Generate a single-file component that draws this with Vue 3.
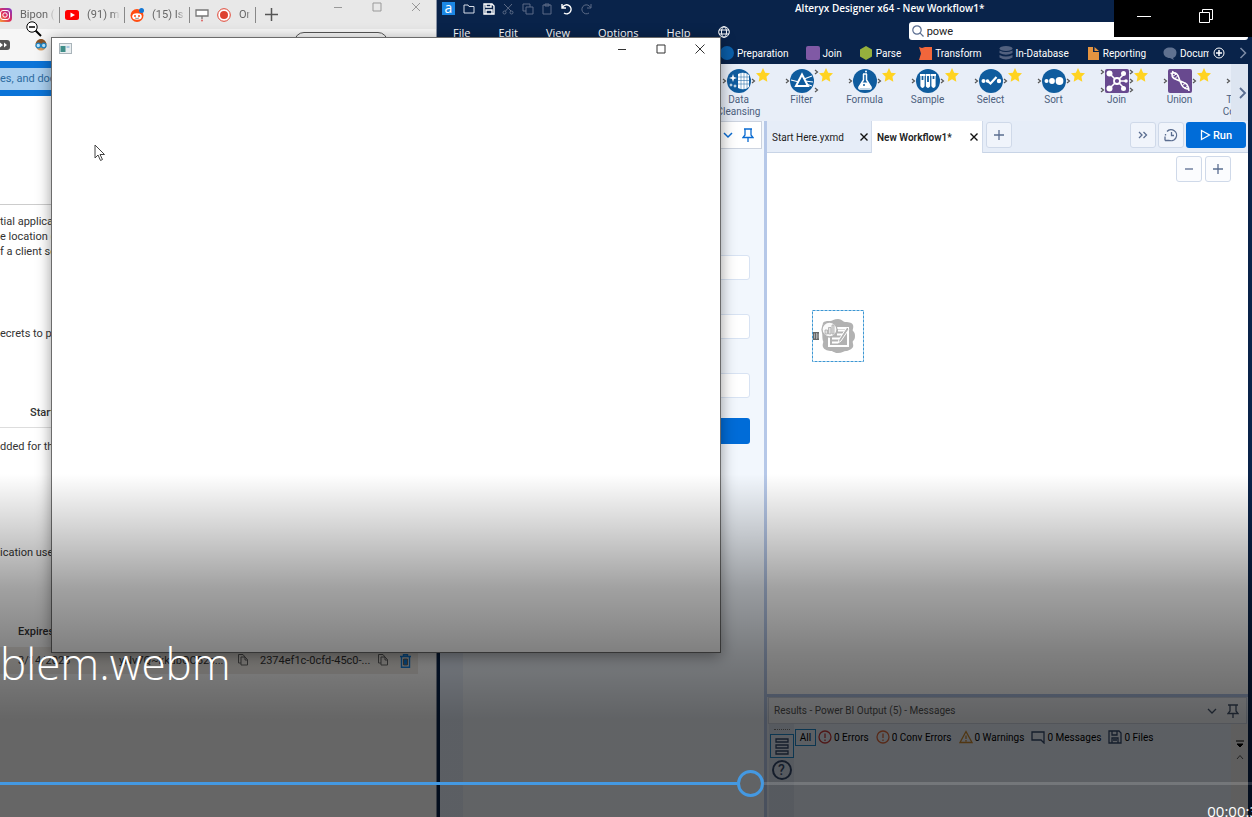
<script setup>
import { ref, computed } from 'vue'

const query = ref('powe')
const position = ref(60.2)
const trackStyle = computed(() => ({ '--done': position.value / 100 }))

const categories = [
  { name: 'Preparation', icon: '<circle cx="7" cy="7" r="7" fill="#0b5ea8"/>' },
  { name: 'Join', icon: '<rect width="14" height="14" rx="2" fill="#8059a5"/>' },
  { name: 'Parse', icon: '<path d="M7 0l6 3.500v7L7 14l-6-3.500v-7z" fill="#96b03d"/>' },
  { name: 'Transform', icon: '<path d="M1 1l3 1 3-1h7v13H1l2-6.500z" fill="#f1663b"/>' },
  { name: 'In-Database', icon: '<g fill="#52617f"><ellipse cx="7" cy="2.500" rx="6.500" ry="2.500"/><path d="M.5 4.500q6.500 3 13 0v2.500q-6.500 3.500-13 0zM.5 9q6.500 3 13 0v2.500q-6.500 4-13 0z"/></g>' },
  { name: 'Reporting', icon: '<path d="M2 1h5v5h6v8H2z" fill="#e59440"/><path d="M8.500 1L13 5H8.500z" fill="#e59440"/>' },
  { name: 'Docum', icon: '<path d="M7 1.500c4 0 6.500 2 6.500 5S12 11.500 10 12l1 2-4-2C3 12 .5 9.500.5 6.500s2.500-5 6.500-5z" fill="#5f7190"/>' }
]

const disc = '<circle cx="12" cy="12" r="12" fill="#0f5c9e"/>'
const tile = '<rect width="24" height="24" rx="2" fill="#68498f"/>'
const tools = [
  { name: 'Data Cleansing', right: 1, icon: disc + '<path d="M11 5q6-3 11 1v12q-5 4-11 1z" fill="#fff"/><path d="M14 4v16M17 4v16M20 5v14M11 8h11M11 11.500h11M11 15h11" stroke="#0f5c9e" stroke-width=".5"/><path d="M6 5l1 3 3 1-3 1-1 3-1-3-3-1 3-1zM4 14l.6 1.500 1.500.5-1.500.6L4 18l-.6-1.400L2 16l1.400-.5zM8 15l.6 1.500 1.500.5-1.500.6L8 19l-.6-1.400L6 17l1.400-.5z" fill="#fff"/>' },
  { name: 'Filter', right: 2, icon: disc + '<path d="M12 5.500l6 11.500H6z" fill="none" stroke="#fff" stroke-width="2"/><path d="M1 11l8 2M14 10l8-3M15 12l8 1M16 15l6 2" stroke="#fff" stroke-width="1.200"/>' },
  { name: 'Formula', right: 1, icon: disc + '<path d="M10 5h4M10.500 5v6l-4.500 7q-.5 2 1 2h10q1.500 0 1-2l-4.500-7V5" fill="none" stroke="#fff" stroke-width="1.500"/><path d="M9 13.500h6l3 5.500H6z" fill="#fff"/><circle cx="11" cy="16" r="1" fill="#0f5c9e"/><circle cx="13" cy="2.500" r="1" fill="#fff"/>' },
  { name: 'Sample', right: 1, icon: disc + '<path d="M4 6h5M9.500 6h5M15 6h5" stroke="#fff" stroke-width="2"/><path d="M5 7v10q1.500 3 3 0V7M10.500 7v10q1.500 3 3 0V7M16 7v10q1.500 3 3 0V7" fill="none" stroke="#fff" stroke-width="1.200"/><path d="M5 11h3v7H5zM10.500 13h3v5h-3zM16 10h3v8h-3z" fill="#fff"/>' },
  { name: 'Select', right: 1, icon: disc + '<path d="M8 11.500l3.500 3 6-6.500" fill="none" stroke="#fff" stroke-width="2.200"/><circle cx="4.500" cy="12" r="2" fill="#fff"/><circle cx="8.500" cy="12" r="1.800" fill="#fff"/><circle cx="20" cy="12" r="2.200" fill="#fff"/>' },
  { name: 'Sort', right: 1, icon: disc + '<circle cx="4.500" cy="12" r="2" fill="#fff"/><circle cx="10" cy="12" r="2.900" fill="#fff"/><circle cx="17.500" cy="12" r="3.900" fill="#fff"/>' },
  { name: 'Join', left: 2, right: 3, icon: tile + '<path d="M5 5l14 14M5 19L19 5M12 12h9" stroke="#fff" stroke-width="1.500"/><g fill="#fff"><circle cx="4.500" cy="4.500" r="3"/><circle cx="18.500" cy="4.500" r="2.500"/><circle cx="4.500" cy="19.500" r="3"/><circle cx="18.500" cy="19.500" r="2.500"/><circle cx="21" cy="12" r="1.800"/></g><circle cx="12" cy="12" r="3" fill="#68498f" stroke="#fff" stroke-width="1.800"/>' },
  { name: 'Union', right: 1, icon: tile + '<path d="M2.500 4.500C10 2 10 7 12 12s3 8 9.500 8.500M5 2C2 10 7 9.500 12 12s8 1 9 10" fill="none" stroke="#fff" stroke-width="1.600"/><path d="M4.500 7.500l4.500-3M7 9.500l3-3M14 17l3.500-3M16.500 19.500l3.500-3" stroke="#fff"/>' },
  { name: 'Text To Columns', right: 0, icon: '<path d="M12 0l12 6v12l-12 6L0 18V6z" fill="#96b03d"/>' }
]

const alertDisc = '<circle cx="7" cy="7" r="6"/><path d="M7 3.500v4.500M7 9.500v1.500"/>'
const filters = [
  { text: '0 Errors', color: '#c43a3a', icon: alertDisc },
  { text: '0 Conv Errors', color: '#d9673a', icon: alertDisc },
  { text: '0 Warnings', color: '#c9872c', icon: '<path d="M7 1.500l6 11H1zM7 5.500v3.500M7 10v1.500"/>' },
  { text: '0 Messages', color: '#34496b', icon: '<path d="M1 2h12v11l-3-3H1z"/>' },
  { text: '0 Files', color: '#34496b', icon: '<path d="M1 1h10l2 2v10H1zM4 1v4h5V1M4 13V8h6v5M5 10h4"/>' }
]

const connector = (n) => ({ 1: [10], 2: [1, 19], 3: [1, 10, 19] }[n] || [])
</script>

<template>
  <div class="desktop">
    <section class="browser">
      <nav class="tabs">
        <a class="tab insta" href="#">
          <svg class="fav" viewBox="0 0 14 14"><defs><linearGradient id="ig" x1="0" y1="1" x2="1" y2="0"><stop offset="0" stop-color="#f9b233" /><stop offset=".5" stop-color="#dd2a5b" /><stop offset="1" stop-color="#7a3bd0" /></linearGradient></defs><rect width="14" height="14" rx="4" fill="url(#ig)" /><rect x="2.500" y="2.500" width="9" height="9" rx="2.500" fill="none" stroke="#fff" /><circle cx="7" cy="7" r="2.200" fill="none" stroke="#fff" /></svg>
          <span class="name">Bipon (@</span>
        </a>
        <a class="tab" href="#">
          <svg class="fav" viewBox="0 0 14 14"><rect y="2" width="14" height="10" rx="2.500" fill="#f00" /><path d="M5.500 4.500v5L10 7z" fill="#fff" /></svg>
          <span class="name">(91) mo</span>
        </a>
        <a class="tab" href="#">
          <svg class="fav" viewBox="0 0 14 14"><circle cx="7" cy="7.500" r="6.500" fill="#ff4d12" /><ellipse cx="7" cy="8.500" rx="4.800" ry="3.200" fill="#fff" /><circle cx="5" cy="8" r="1" fill="#ff4d12" /><circle cx="9" cy="8" r="1" fill="#ff4d12" /><path d="M5 10q2 1 4 0" stroke="#444" stroke-width=".6" fill="none" /><circle cx="11.500" cy="2.500" r="2.500" fill="#1377d4" /></svg>
          <span class="name">(15) Is i</span>
        </a>
        <a class="tab record" href="#">
          <svg class="fav" viewBox="0 0 14 14"><path d="M1 2h12v6H1zM7 8v3" fill="#fff" stroke="#777" stroke-width="1.300" /><circle cx="7" cy="12.500" r="1" fill="#d66" /></svg>
          <svg class="fav" viewBox="0 0 14 14"><circle cx="7" cy="7" r="6.300" fill="#fff" stroke="#de4130" /><circle cx="7" cy="7" r="4" fill="#de4130" /></svg>
          <span class="name">Or</span>
        </a>
        <button class="newtab" aria-label="New tab"><svg width="13" height="13" viewBox="0 0 13 13"><path d="M6.500 0v13M0 6.500h13" stroke="#555" stroke-width="1.500" /></svg></button>
        <div class="winbtns">
          <button aria-label="Minimize"><svg width="10" height="10" viewBox="0 0 10 10"><path d="M1 5.500h8" /></svg></button>
          <button aria-label="Maximize"><svg width="10" height="10" viewBox="0 0 10 10"><path d="M1 1h8v8H1z" /></svg></button>
          <button aria-label="Close"><svg width="10" height="10" viewBox="0 0 10 10"><path d="M1 1l8 8M9 1L1 9" /></svg></button>
        </div>
      </nav>
      <div class="bookmarks">
        <svg width="10" height="10" viewBox="0 0 10 10"><rect x="-6" width="16" height="10" rx="3" fill="#555" /><path d="M0 2.500L3 5 0 7.500zM4 2.500L7 5 4 7.500z" fill="#fff" /></svg>
        <svg width="12" height="12" viewBox="0 0 12 12"><circle cx="6" cy="6" r="5.500" fill="#d99a5a" /><path d="M.5 5Q2 0 6 0t5.500 5z" fill="#8a5327" /><g fill="#bfe6fb" stroke="#1d86c9" stroke-width="1.300"><circle cx="3.300" cy="6.500" r="2.300" /><circle cx="8.700" cy="6.500" r="2.300" /></g></svg>
        <span class="omnibox"></span>
      </div>
      <div class="azure"><span class="azsearch">es, and docs</span></div>
      <div class="page">
        <p class="para">tial applicat<br>e location (u<br>f a client se</p>
        <p class="secrets">ecrets to pr</p>
        <p class="start">Start</p>
        <p class="none">dded for this</p>
        <p class="use">ication uses</p>
        <table class="creds">
          <thead><tr><th scope="col">Expires</th><td></td><td></td><td></td></tr></thead>
          <tbody>
            <tr>
              <td>3/14/2023</td>
              <td class="value">yNv7Q~kkubOC52s...<svg width="10" height="12" viewBox="0 0 10 12"><path d="M3 3h4l2.500 2.500V11H3zM7 3v3h2.500M3 9H.5V.5H5L7 3" /></svg></td>
              <td class="ident">2374ef1c-0cfd-45c0-...<svg width="10" height="12" viewBox="0 0 10 12"><path d="M3 3h4l2.500 2.500V11H3zM7 3v3h2.500M3 9H.5V.5H5L7 3" /></svg></td>
              <td><button class="trash" aria-label="Delete"><svg width="11" height="14" viewBox="0 0 11 14"><path d="M0 2.500h11M3.500 2.500V.7h4v1.800M1.500 2.500v10.800h8V2.500" fill="none" stroke="#0f7fe0" stroke-width="1.400" /><path d="M3.500 5h4v6h-4z" fill="#0f7fe0" /></svg></button></td>
            </tr>
          </tbody>
        </table>
      </div>
    </section>

    <section class="alteryx">
      <header class="titlebar">
        <span class="logo">a</span>
        <div class="quick">
          <svg class="qa" viewBox="0 0 12 12"><path d="M1 2h4l1 1.500h5V10H1z" /></svg>
          <svg class="qa strong" viewBox="0 0 12 12"><path d="M1 1h8l2 2v8H1zM3 1v3h5V1M3 11V7h6v4" /></svg>
          <svg class="qa dim" viewBox="0 0 12 12"><path d="M10 1L3.500 8M2 1l7 7" /><circle cx="2.500" cy="9.500" r="1.500" /><circle cx="9.500" cy="9.500" r="1.500" /></svg>
          <svg class="qa dim" viewBox="0 0 12 12"><path d="M4 4h7v7H4zM4 8H1V1h7v3" /></svg>
          <svg class="qa dim" viewBox="0 0 12 12"><path d="M2 2h8v9H2zM4 1h4v2H4z" /></svg>
          <svg class="qa strong" viewBox="0 0 12 12"><path d="M1 1v4h4M1.500 4.500A4.500 4.500 0 1 1 3 10" /></svg>
          <svg class="qa dim" viewBox="0 0 12 12"><path d="M11 1v4H7M10.500 4.500A4.500 4.500 0 1 0 9 10" /></svg>
        </div>
        <h1>Alteryx Designer x64 - New Workflow1*</h1>
      </header>
      <div class="menubar">
        <nav class="menu">
          <a href="#">File</a><a href="#">Edit</a><a href="#">View</a><a href="#">Options</a><a href="#">Help</a>
          <svg width="12" height="12" viewBox="0 0 12 12"><g fill="none" stroke="#fff"><circle cx="6" cy="6" r="5.300" /><ellipse cx="6" cy="6" rx="2.500" ry="5.300" /><path d="M1 4h10M1 8h10" /></g></svg>
        </nav>
        <label class="search">
          <svg width="12" height="12" viewBox="0 0 12 12"><circle cx="5" cy="5" r="4.200" fill="none" stroke="#5a6d90" stroke-width="1.200" /><path d="M8.200 8.200L11.500 11.500" stroke="#5a6d90" stroke-width="1.200" /></svg>
          <input v-model="query" aria-label="Search tools">
        </label>
      </div>
      <nav class="categories">
        <div class="catlist">
          <a v-for="c in categories" :key="c.name" href="#"><svg width="14" height="14" viewBox="0 0 14 14" v-html="c.icon"></svg>{{ c.name }}</a>
        </div>
        <button aria-label="Add category"><svg width="12" height="12" viewBox="0 0 12 12"><path d="M6 3v6M3 6h6" stroke="#fff" stroke-width="1.500" /><circle cx="6" cy="6" r="5" fill="none" stroke="#fff" /></svg></button>
        <button aria-label="More categories"><svg width="8" height="12" viewBox="0 0 8 12"><path d="M1.500 1l5 5-5 5" fill="none" stroke="#7e8ca6" stroke-width="1.500" /></svg></button>
      </nav>
      <div class="palette">
        <div class="toollist">
          <div v-for="(t, i) in tools" :key="i" class="tool">
            <svg width="56" height="26" viewBox="-16 -1 56 26">
              <g v-html="t.icon"></g>
              <g fill="none" stroke="#555" stroke-width="1.200">
                <path v-for="y in connector(t.left || 1)" :key="'l' + y" :d="`M-4 ${y}l2.500 2-2.500 2`" />
                <path v-for="y in connector(t.right)" :key="'r' + y" :d="`M25 ${y}l2.500 2-2.500 2`" />
              </g>
            </svg>
            <svg v-if="t.right" class="star" width="14" height="14" viewBox="0 0 13 13"><path d="M6.500 0l2 4.300 4.500.6-3.300 3.200.8 4.700-4-2.300-4 2.300.8-4.700L0 4.900l4.500-.6z" fill="#ffd321" /></svg>
            <span>{{ t.name }}</span>
          </div>
        </div>
        <button class="more" aria-label="Scroll tools"><svg width="8" height="12" viewBox="0 0 8 12"><path d="M1 1l5 5-5 5" fill="none" stroke="#5a6d90" stroke-width="1.800" /></svg></button>
      </div>

      <div class="body">
        <aside class="config">
          <div class="confighead">
            <svg width="10" height="10" viewBox="0 0 10 10"><path d="M1 3l4 4 4-4" fill="none" stroke="#0a6bd1" stroke-width="1.500" /></svg>
            <svg class="pin" width="12" height="14" viewBox="0 0 12 14"><path d="M2 1h8M3 1v6L1 9.500h10L9 7V1M6 9.500V14" fill="none" stroke="#0a6bd1" stroke-width="1.300" /></svg>
          </div>
          <div class="configbody">
            <div class="rail"></div>
            <form class="form" @submit.prevent>
              <input aria-label="Tenant">
              <input aria-label="Client">
              <input aria-label="Secret">
              <button aria-label="Sign in"></button>
            </form>
          </div>
        </aside>
        <main class="work">
          <div class="wtabs">
            <div class="wtab">Start Here.yxmd<button aria-label="Close tab"><svg width="8" height="8" viewBox="0 0 8 8"><path d="M.5.5l7 7M7.500.5l-7 7" /></svg></button></div>
            <div class="wtab active">New Workflow1*<button aria-label="Close tab"><svg width="8" height="8" viewBox="0 0 8 8"><path d="M.5.5l7 7M7.500.5l-7 7" /></svg></button></div>
            <button class="sq plus" aria-label="New workflow"><svg width="12" height="12" viewBox="0 0 12 12"><path d="M6 1v10M1 6h10" /></svg></button>
            <button class="sq first" aria-label="More"><svg width="12" height="12" viewBox="0 0 12 12"><path d="M2 3l3 3-3 3M6.500 3l3 3-3 3" /></svg></button>
            <button class="sq" aria-label="Schedule"><svg width="14" height="14" viewBox="0 0 14 14"><path d="M3 3.500A5.500 5.500 0 1 1 5 12.300M1 12.500h4.500M1 12.500V8.500M1.500 6v1.500M7.500 4v3.500H10" /></svg></button>
            <button class="run"><svg width="11" height="12" viewBox="0 0 11 12"><path d="M1.500 1.500v9L9.500 6z" fill="none" stroke="#fff" stroke-width="1.300" /></svg>Run</button>
          </div>
          <div class="canvas">
            <div class="zoomers">
              <button class="sq" aria-label="Zoom out"><svg width="12" height="12" viewBox="0 0 12 12"><path d="M2 6h8" /></svg></button>
              <button class="sq" aria-label="Zoom in"><svg width="12" height="12" viewBox="0 0 12 12"><path d="M6 1v10M1 6h10" /></svg></button>
            </div>
            <svg class="node" width="52" height="52" viewBox="0 0 52 52">
              <rect x=".5" y=".5" width="51" height="51" fill="#fff" stroke="#3d97d3" stroke-dasharray="3 1" />
              <path d="M26 9c4 0 5 3 7 3s7 0 8 3-1 5 0 6 2 2 2 5-1 4-2 5 1 4 0 6-5 4-7 4-4 2-8 2-5-2-7-2-7-1-8-4 1-5 0-6-1-16 0-18 5-2 7-2 4-2 8-2z" fill="#b2b2b2" />
              <path d="M16 17h21v20H16z" fill="#fff" /><path d="M18 19h17v16H18z" fill="#b2b2b2" />
              <path d="M26 20.500h9M25 24.500h8M20 28.500h8M20 32.500h6" stroke="#fff" stroke-width="2" /><path d="M37 19l-8 12-3 2 1-3.500L35 17z" fill="#b2b2b2" stroke="#fff" />
              <circle cx="17.500" cy="19.500" r="7.500" fill="#fafafa" stroke="#b2b2b2" stroke-width="1.300" />
              <path d="M13 24v-4h2.500v4zM16.500 24v-6.500H19V24zM20 24v-9h2v9z" fill="#e2e2e2" stroke="#aaa" stroke-width=".8" />
              <path d="M1 22h6v8H1z" fill="#666" /><path d="M2.500 23.500v5M4.500 23v6M6 23.500v5" stroke="#ccc" stroke-width=".7" />
            </svg>
          </div>
          <section class="results">
            <header class="rhead">
              <span>Results - Power BI Output (5) - Messages</span>
              <svg width="10" height="10" viewBox="0 0 10 10"><path d="M1 3l4 4 4-4" fill="none" stroke="#44546c" stroke-width="1.300" /></svg>
              <svg width="12" height="14" viewBox="0 0 12 14"><path d="M1 1h10M3 1v6L1 9.500h10L9 7V1M6 9.500V14" fill="none" stroke="#44546c" stroke-width="1.300" /></svg>
            </header>
            <div class="rbody">
              <div class="rrail">
                <span class="dots"></span>
                <button class="list" aria-label="Messages"><svg width="14" height="17" viewBox="0 0 14 17"><path d="M1 1h12v3H1zM1 7h12v3H1zM1 13h12v3H1z" fill="none" stroke="#34496b" stroke-width="1.300" /></svg></button>
                <button class="help" aria-label="Help">?</button>
              </div>
              <div class="filters">
                <button class="all">All</button>
                <button v-for="f in filters" :key="f.text"><svg width="14" height="14" viewBox="0 0 14 14" fill="none" :stroke="f.color" stroke-width="1.300" v-html="f.icon"></svg>{{ f.text }}</button>
              </div>
              <div class="scroll">
                <svg width="8" height="8" viewBox="0 0 8 8"><path d="M0 1h8M1 4h6L4 7z" fill="#000" stroke="#000" /></svg>
                <svg width="8" height="6" viewBox="0 0 8 6"><path d="M1 5l3-3.500L7 5" fill="none" stroke="#555" /></svg>
              </div>
            </div>
          </section>
        </main>
      </div>
    </section>

    <section class="dialog" role="dialog" aria-label="Sign in window">
      <header>
        <svg width="13" height="11" viewBox="0 0 13 11"><rect x=".5" y=".5" width="12" height="10" fill="#e9eef0" stroke="#a9b4ba" /><rect x="1.500" y="3" width="5" height="6" fill="#3f8d88" /><rect x="7.500" y="3" width="3" height="2" fill="#a8c8e0" /></svg>
        <div class="winbtns dark">
          <button aria-label="Minimize"><svg width="10" height="10" viewBox="0 0 10 10"><path d="M1 5.500h8" /></svg></button>
          <button aria-label="Maximize"><svg width="10" height="10" viewBox="0 0 10 10"><path d="M1 1h8v8H1z" /></svg></button>
          <button aria-label="Close"><svg width="10" height="10" viewBox="0 0 10 10"><path d="M.5.5l9 9M9.500.5l-9 9" /></svg></button>
        </div>
      </header>
    </section>

    <div class="player">
      <h2>blem.webm</h2>
      <input v-model.number="position" class="seek" type="range" min="0" max="100" step="0.1" aria-label="Seek" :style="trackStyle">
      <span class="time">00:00:3</span>
    </div>
    <div class="caption">
      <button aria-label="Minimize player"><svg width="14" height="14" viewBox="0 0 14 14"><path d="M0 7.500h14" stroke="#fff" /></svg></button>
      <button aria-label="Restore player"><svg width="14" height="14" viewBox="0 0 14 14"><path d="M.5 3.500h10v10H.5zM3.500 3.500v-3h10v10h-3" fill="none" stroke="#fff" /></svg></button>
    </div>
    <svg class="arrow" width="12" height="18" viewBox="0 0 12 18"><path d="M1 1v13l3-3 2.500 5.500 2-1L6 10.500h4.500z" fill="#fff" stroke="#444" /></svg>
    <svg class="glass" width="16" height="16" viewBox="0 0 16 16"><path d="M9.500 9.500l5.500 5.500" stroke="#000" stroke-width="2" /><circle cx="6" cy="6" r="5.200" fill="#fff" stroke="#000" /><path d="M3 6h6" stroke="#000" stroke-width="1.500" /></svg>
  </div>
</template>

<style>
body { margin: 0; background: #fff; }
</style>

<style scoped>
.desktop {
  position: relative;
  display: grid;
  grid-template-columns: 109fr 204fr;
  height: 100vh;
  overflow: hidden;
  font: 11px/15px Roboto, "Open Sans", sans-serif;
  color: #333;
}
* { box-sizing: border-box; }
svg { display: block; flex: none; }
button { padding: 0; border: 0; background: none; font: inherit; color: inherit; display: flex; align-items: center; justify-content: center; }
a { color: inherit; text-decoration: none; }
p, h1, h2 { margin: 0; font-weight: 400; }
input { font: inherit; }

.browser { display: flex; flex-direction: column; min-width: 0; overflow: hidden; background: #fff; }
.tabs { display: flex; align-items: center; height: 29px; flex: none; background: #e8e8e8; color: #666; }
.tab { display: flex; align-items: center; gap: 8px; width: 65px; height: 16px; padding-left: 5px; border-right: 1px solid #888; white-space: nowrap; overflow: hidden; }
.tab.insta { width: 61px; padding: 0; margin-left: -1px; }
.tab.record { width: 66px; }
.fav { width: 14px; height: 14px; }
.insta .fav { margin-left: -1px; }
.name { overflow: hidden; margin-right: 4px; -webkit-mask-image: linear-gradient(90deg, #000 75%, transparent); mask-image: linear-gradient(90deg, #000 75%, transparent); }
.record .name { margin: 0; }
.newtab { margin-left: 9px; }
.winbtns { display: flex; gap: 29px; margin-left: auto; margin-right: 15px; align-self: flex-start; padding-top: 2px; fill: none; stroke: #999; }
.bookmarks { display: flex; align-items: center; gap: 25px; height: 32px; flex: none; background: #f6f6f6; }
.omnibox { align-self: flex-start; width: 94px; height: 22px; margin: 3px 48px 0 auto; border: 1px solid #555; border-radius: 10px; }
.azure { display: flex; align-items: center; height: 35px; flex: none; background: #0b74d8; color: #2d6ba0; }
.azsearch { flex: 1; height: 22px; line-height: 22px; background: #abd0f0; }
.page { flex: 1; background: #fff; }
.para { margin-top: 108px; padding-top: 9px; border-top: 1px solid #ccc; }
.secrets { margin-top: 67px; }
.start { margin-top: 64px; padding: 0 0 7px 30px; border-bottom: 1px solid #ddd; font-weight: 500; }
.none { margin-top: 11px; }
.use { margin-top: 91px; }
.creds { width: 418px; max-width: 100%; margin-top: 64px; border-collapse: collapse; table-layout: fixed; }
.creds td, .creds th { padding: 0; text-align: left; font-weight: 400; }
.creds th { height: 23px; padding-left: 18px; width: 119px; vertical-align: top; font-weight: 500; }
.creds thead td:nth-child(2) { width: 141px; }
.creds thead td:nth-child(3) { width: 140px; }
.creds tbody tr { background: #efebe6; }
.creds tbody td { height: 27px; white-space: nowrap; }
.creds tbody td:first-child { padding-left: 18px; }
.creds td svg { float: right; margin: 1px 12px 0 0; fill: none; stroke: #666; }
.creds .trash svg { margin: 0; float: none; }

.alteryx { display: flex; flex-direction: column; min-width: 0; padding: 0 4px 0 3px; background: #09234a; border-left: 1px solid #8a94a6; color: #fff; }
.titlebar { display: flex; align-items: center; gap: 8px; height: 17px; flex: none; padding-left: 2px; }
.logo { width: 13px; height: 13px; background: #1b87e5; font: 14px/11px "Open Sans", sans-serif; text-align: center; }
.quick { display: flex; justify-content: space-between; width: 129px; }
.qa { width: 12px; height: 12px; fill: none; stroke: #d5dbe6; }
.qa.strong { stroke-width: 1.400; stroke: #fff; }
.qa.dim { stroke: #5c6b86; }
h1 { font: 600 10px/15px "Open Sans", sans-serif; margin-left: 195px; white-space: nowrap; }
.menubar { display: flex; height: 25px; flex: none; padding-top: 5px; }
.menu { display: flex; align-items: center; gap: 28px; padding: 0 0 0 13px; width: 58%; font-family: "Open Sans", sans-serif; }
.search { display: flex; align-items: center; gap: 3px; flex: 1; height: 18px; padding-left: 3px; margin-bottom: 2px; border-radius: 3px; background: #fff; }
.search input { flex: 1; min-width: 0; padding: 0; border: 0; outline: 0; background: none; color: #222; }
.categories { display: flex; align-items: center; gap: 14px; height: 22px; flex: none; padding-right: 1px; font-size: 10px; }
.catlist { display: flex; gap: 17px; flex: 1; min-width: 0; margin-right: -10px; padding-left: 280px; overflow: hidden; white-space: nowrap; }
.catlist a { display: flex; align-items: center; gap: 3px; }
.palette { display: flex; height: 57px; flex: none; background: #e8eef8; color: #4c5f7d; }
.toollist { display: flex; flex: 1; min-width: 0; padding-left: 267px; overflow: hidden; }
.tool { position: relative; flex: none; width: 63px; padding-top: 4px; text-align: center; font-size: 10px; line-height: 12px; }
.tool svg { margin: 0 auto; }
.tool > span { display: block; width: 46px; margin: 0 auto; }
.tool .star { position: absolute; left: 49px; top: 4px; }
.more { width: 17px; background: #dde5f1; padding-left: 6px; }

.body { display: grid; grid-template-columns: 324fr 3px 481fr; flex: 1; min-height: 0; background: #b6c8e8; }
.config { display: flex; flex-direction: column; background: #f2f7fd; }
.confighead { display: flex; align-items: center; justify-content: flex-end; gap: 9px; height: 28px; margin-right: 2px; padding-right: 7px; background: #fff; border: 1px solid #ccd3df; }
.configbody { display: flex; flex: 1; }
.rail { width: 23px; background: #e4ecf8; }
.form { flex: 1; display: flex; flex-direction: column; gap: 34px; padding: 106px 14px 0 20px; }
.form input { width: 100%; height: 25px; border: 1px solid #d8e3f3; border-radius: 3px; background: #fff; }
.form button { height: 26px; margin-top: -14px; border-radius: 3px; background: #006cd8; }
.work { grid-column: 3; display: flex; flex-direction: column; min-width: 0; background: #fff; color: #222; font-size: 10px; }
.wtabs { display: flex; align-items: center; gap: 2px; height: 32px; flex: none; padding: 0 2px 3px 0; background: #e6edf8; border-bottom: 1px solid #c8d4e6; }
.wtab { display: flex; align-items: center; justify-content: space-between; height: 32px; width: 105px; margin: 0 -2px -4px 0; padding: 0 3px 0 5px; border-right: 1px solid #d0daea; white-space: nowrap; stroke-width: 1.400; }
.wtab svg { stroke: #111; }
.wtab.active { width: 111px; background: #fff; font-weight: 600; padding-right: 4px; }
.sq { width: 26px; height: 26px; border: 1px solid #cfd9e9; border-radius: 3px; background: #f0f4fb; }
.sq svg { fill: none; stroke: #5a6d90; stroke-width: 1.300; }
.plus { margin-left: 3px; }
.first { margin-left: auto; }
.run { width: 60px; height: 26px; gap: 2px; border-radius: 3px; background: #006cd8; color: #fff; font-size: 11px; font-weight: 500; }
.canvas { position: relative; flex: 1; min-height: 0; }
.zoomers { display: flex; justify-content: flex-end; gap: 3px; padding: 3px 17px 0 0; }
.zoomers .sq { background: #fbfcfe; }
.node { position: absolute; left: 45px; top: 157px; }
.results { height: 123px; flex: none; display: flex; flex-direction: column; border-top: 3px solid #b0c3e6; background: #e6edf8; }
.rhead { display: flex; align-items: center; gap: 10px; height: 27px; flex: none; margin: 0 1px; padding: 0 7px 0 5px; background: #f2f4f8; border: 1px solid #ccd3df; color: #555; }
.rhead span { flex: 1; }
.rbody { display: flex; flex: 1; padding-left: 2px; }
.rrail { display: flex; flex-direction: column; align-items: center; width: 25px; padding-top: 5px; background: #d8e0ee; }
.dots { width: 16px; border-top: 1px dotted #777; margin-bottom: 4px; }
.list { width: 24px; height: 24px; border: 1px solid #1d86c9; background: #e0e8f4; }
.help { width: 20px; height: 20px; margin-top: 2px; border: 2px solid #34496b; border-radius: 50%; font-size: 14px; line-height: 16px; font-weight: 500; color: #34496b; }
.filters { display: flex; align-items: center; gap: 7px; height: 18px; margin-top: 4px; margin-left: 1px; flex: 1; color: #000; white-space: nowrap; }
.filters button { gap: 2px; }
.filters .all { width: 21px; height: 17px; margin-right: -5px; border: 1px solid #1d86c9; }
.scroll { display: flex; flex-direction: column; align-items: center; gap: 6px; width: 17px; padding-top: 16px; background: #ecebea; }

.dialog { position: absolute; left: 51px; right: 531px; top: 37px; bottom: 164px; background: #fff; border: 1px solid #6b6b6b; box-shadow: 0 3px 14px rgba(0, 0, 0, .4); }
.dialog header { display: flex; align-items: center; height: 21px; padding-left: 7px; }
.winbtns.dark { stroke: #333; align-self: center; padding: 0; margin-right: 15px; }

.player { position: absolute; inset: 0; display: flex; flex-direction: column; justify-content: flex-end; overflow: hidden; color: #fff; background: linear-gradient(rgba(0, 0, 0, 0) 58%, rgba(0, 0, 0, .18) 65%, rgba(0, 0, 0, .37) 72%, rgba(0, 0, 0, .5) 80%, rgba(0, 0, 0, .6) 88%); }
h2 { font: 300 44px/60px "Open Sans", sans-serif; }
.seek { --x: calc(13px + (100% - 26px) * var(--done)); appearance: none; width: 100%; height: 28px; margin: 76px 0 0; background: linear-gradient(90deg, #4499e2 calc(var(--x) - 13px), transparent calc(var(--x) - 13px), transparent calc(var(--x) + 13px), rgba(255, 255, 255, .15) calc(var(--x) + 13px)) center / 100% 3px no-repeat; }
.seek::-webkit-slider-thumb { appearance: none; width: 27px; height: 27px; border: 3px solid #4499e2; border-radius: 50%; background: transparent; }
.time { align-self: flex-end; margin: 5px -6px -3px 0; font: 15px/18px "Open Sans", sans-serif; }
.caption { position: absolute; top: 0; right: 0; display: flex; align-items: center; gap: 48px; width: 138px; height: 37px; padding: 0 0 6px 23px; background: #000; }
.arrow { position: absolute; left: 94px; top: 144px; }
.glass { position: absolute; left: 26px; top: 21px; }
</style>
